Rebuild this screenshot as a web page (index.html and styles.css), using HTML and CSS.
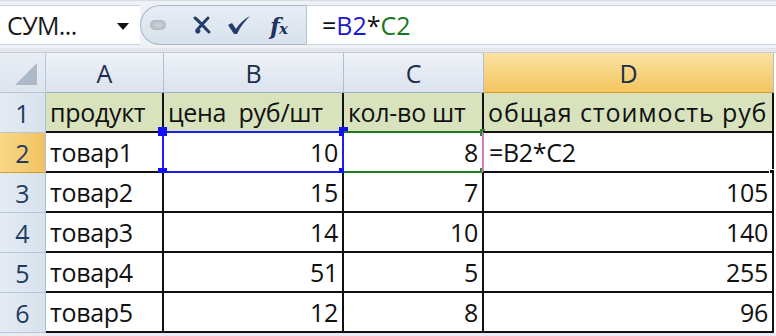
FILE: index.html
```html
<!DOCTYPE html>
<html>
<head>
<meta charset="utf-8">
<link rel="stylesheet" href="styles.css">
</head>
<body>
<div class="fbar">
  <div class="namebox"><span class="nb-text">СУМ...</span><span class="nb-arrow"></span></div>
  <div class="tools">
    <span class="grip"></span>
    <svg class="ic-x" width="20" height="20" viewBox="0 0 20 20"><path d="M3 3 C8 7 12 12 17 17 M16 3 C12 7 8 12 5 15 C4 17 6 18 7 16" fill="none" stroke="#243d6b" stroke-width="3" stroke-linecap="round"/></svg>
    <svg class="ic-ok" width="26" height="22" viewBox="0 0 26 22"><path d="M2 11 L6 9 L10 15 C14 9 18 5 24 2 C19 7 14 13 11 20 L8 20 Z" fill="#243d6b"/></svg>
    <span class="fx"><i>f</i><i class="xx">x</i></span>
  </div>
  <div class="finput">=<span class="ref-b">B2</span>*<span class="ref-c">C2</span></div>
</div>
<div class="strip"></div>
<div class="sheet">
  <div class="corner"><span class="tri"></span></div>
  <div class="ch">A</div>
  <div class="ch">B</div>
  <div class="ch">C</div>
  <div class="ch ch-sel">D</div>

  <div class="rh">1</div>
  <div class="c hd">продукт</div>
  <div class="c hd">цена&nbsp; руб/шт</div>
  <div class="c hd">кол-во шт</div>
  <div class="c hd wide">общая стоимость руб</div>

  <div class="rh rh-sel">2</div>
  <div class="c">товар1</div>
  <div class="c num sel-b">10<span class="h h-tl"></span><span class="h h-tr"></span><span class="h h-bl"></span><span class="h h-br"></span></div>
  <div class="c num sel-c">8<span class="g g-tr"></span><span class="g g-br"></span></div>
  <div class="c active">=B2*C2<span class="fill"></span></div>

  <div class="rh">3</div>
  <div class="c">товар2</div>
  <div class="c num">15</div>
  <div class="c num">7</div>
  <div class="c num">105</div>

  <div class="rh">4</div>
  <div class="c">товар3</div>
  <div class="c num">14</div>
  <div class="c num">10</div>
  <div class="c num">140</div>

  <div class="rh">5</div>
  <div class="c">товар4</div>
  <div class="c num">51</div>
  <div class="c num">5</div>
  <div class="c num">255</div>

  <div class="rh">6</div>
  <div class="c">товар5</div>
  <div class="c num">12</div>
  <div class="c num">8</div>
  <div class="c num">96</div>
</div>
</body>
</html>
```

FILE: styles.css
```css
* { box-sizing: border-box; }
html, body { margin: 0; padding: 0; }
body {
  width: 776px;
  height: 336px;
  overflow: hidden;
  background: #e9edf2;
  font-family: "Open Sans", "Noto Sans", sans-serif;
  color: #111;
}
.fbar {
  display: flex;
  height: 48px;
  padding-top: 4px;
  background: #eef1f5;
  border-top: 1px solid #d5dbe3;
}
.namebox {
  width: 140px;
  height: 40px;
  background: #fff;
  display: flex;
  align-items: center;
  padding-left: 7px;
  border-top: 1px solid #c9d3df;
  border-bottom: 1px solid #c9d3df;
}
.nb-text { font-size: 25px; color: #1a1a1a; width: 110px; letter-spacing: -0.6px; }
.nb-arrow {
  width: 0; height: 0;
  border-left: 6px solid transparent;
  border-right: 6px solid transparent;
  border-top: 7px solid #111;
  margin-top: 2px;
}
.tools {
  width: 167px;
  height: 40px;
  display: flex;
  align-items: center;
  background: linear-gradient(#e7edf5, #d8e1ec);
  border: 1px solid #a9b7c8;
  border-right: 1px solid #b5c2d2;
  border-radius: 20px 0 0 20px;
  padding-left: 9px;
}
.grip {
  width: 16px; height: 10px;
  border-radius: 5px;
  background: radial-gradient(#d3d7dc, #a9adb3);
  margin-right: 26px;
}
.ic-x { margin-right: 14px; }
.ic-ok { margin-right: 18px; }
.fx {
  font-family: "DejaVu Serif", "Liberation Serif", serif;
  color: #1d3460;
  font-size: 23px;
  font-weight: bold;
  line-height: 1;
}
.fx .xx { font-size: 15px; margin-left: -1px; }
.finput {
  flex: 1;
  height: 40px;
  background: #fff;
  border-top: 1px solid #c9d3df;
  border-bottom: 1px solid #c9d3df;
  display: flex;
  align-items: center;
  padding-left: 15px;
  font-size: 25px;
  color: #111;
}
.ref-b { color: #1a1ad0; }
.ref-c { color: #157a1d; }
.strip {
  height: 5px;
  background: #e3e7ec;
  border-bottom: 1px solid #c5ccd5;
}
.sheet {
  display: grid;
  grid-template-columns: 46px 118px 180px 140px 290px;
  grid-template-rows: 40px repeat(6, 40px);
  background: #fff;
  width: 776px;
}
.corner {
  background: linear-gradient(#e9eef5, #dde4ee);
  border-right: 1px solid #b8c6d8;
  border-bottom: 1px solid #b8c6d8;
  position: relative;
}
.tri {
  position: absolute;
  right: 8px; bottom: 7px;
  width: 0; height: 0;
  border-left: 22px solid transparent;
  border-bottom: 22px solid #aeb9c7;
}
.ch {
  background: linear-gradient(#eef2f8, #dbe3ee);
  border-right: 1px solid #aebfd3;
  border-bottom: 1px solid #9fb2c9;
  display: flex;
  align-items: center;
  justify-content: center;
  font-size: 25px;
  color: #1c2e4a;
}
.ch-sel {
  background: linear-gradient(#fbe3a2, #f3c55f);
  border-bottom: 1px solid #d39c2f;
}
.rh {
  background: linear-gradient(90deg, #e4ebf4, #d7e1ed);
  border-right: 1px solid #aebfd3;
  border-bottom: 1px solid #b7c6d8;
  display: flex;
  align-items: center;
  justify-content: center;
  font-size: 25px;
  color: #1f3b62;
}
.rh-sel {
  background: linear-gradient(90deg, #f9d887, #f2c260);
  border-bottom: 1px solid #d39c2f;
}
.c {
  position: relative;
  border-right: 2px solid #111;
  border-bottom: 2px solid #111;
  display: flex;
  align-items: center;
  padding: 0 4px 0 4px;
  font-size: 25px;
  letter-spacing: -0.3px;
  color: #111;
  white-space: nowrap;
  background: #fff;
}
.hd { background: #d8e3bd; }
.wide { letter-spacing: 0.9px; }
.num { justify-content: flex-end; }
.sel-b {
  border: 2px solid #1d1df0;
  margin-left: -2px;
  margin-top: -2px;
}
.sel-c {
  border: 2px solid #1f7a24;
  border-left: none;
  margin-top: -2px;
}
.h {
  position: absolute;
  width: 9px; height: 9px;
  background: #1212f0;
}
.h-tl { left: -6px; top: -6px; }
.h-tr { right: -6px; top: -6px; }
.h-bl { left: -6px; bottom: -6px; }
.h-br { right: -6px; bottom: -6px; }
.g {
  position: absolute;
  width: 5px; height: 7px;
  background: #2f8a2f;
}
.g-tr { right: -3px; top: -4px; }
.g-br { right: -3px; bottom: -4px; }
.active {
  border: 2px solid #111;
  border-left: 2px solid #d57ad0;
  margin-top: -2px;
  margin-left: -2px;
  padding-left: 5px;
}
.fill {
  position: absolute;
  right: -3px; bottom: -4px;
  width: 6px; height: 6px;
  background: #111;
  border: 1px solid #fff;
}
```
